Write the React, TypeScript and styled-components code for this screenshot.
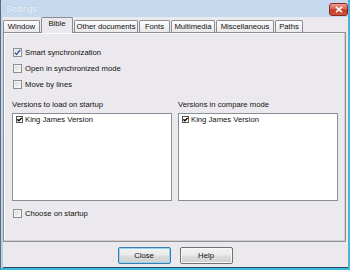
import React from 'react';
import styled, { createGlobalStyle } from 'styled-components';

const Global = createGlobalStyle`
  html, body { margin: 0; padding: 0; }
  body {
    width: 350px; height: 270px; overflow: hidden;
    font-family: "Liberation Sans", Arial, sans-serif;
    -webkit-font-smoothing: antialiased;
  }
`;

const Window = styled.div`
  width: 350px;
  height: 270px;
  box-sizing: border-box;
  display: flex;
  flex-direction: column;
  background: linear-gradient(#c6d9ee, #b8cfe8);
  border-left: 1px solid #5d6b7c;
  border-right: 2px solid #49b6de;
  border-bottom: 2px solid #3cb8e0;
  padding-left: 2px;
`;

const TitleBar = styled.div`
  height: 17px;
  flex: none;
  display: flex;
  align-items: center;
  justify-content: space-between;
  padding: 0 0 0 3px;
`;

const Title = styled.span`
  font-size: 8.5px;
  color: #eef3f9;
  text-shadow: 0 0 2px #a9c1dc;
  padding-top: 1px;
`;

const CloseBox = styled.div`
  width: 19px;
  height: 13px;
  box-sizing: border-box;
  margin-top: 2px;
  border: 1px solid #8a2a22;
  border-radius: 3px;
  background: linear-gradient(#e8a190 0%, #d8634f 45%, #c33a26 55%, #d2553f 100%);
  display: flex;
  align-items: center;
  justify-content: center;
`;

const Client = styled.div`
  flex: 1;
  display: flex;
  flex-direction: column;
  background: #ebe9ed;
  border-bottom: 1px solid #28465f;
  padding: 0 2px 3px 0;
`;

const TabStrip = styled.div`
  height: 15px;
  flex: none;
  display: flex;
  align-items: flex-end;
  gap: 1px;
  position: relative;
  z-index: 1;
`;

const Tab = styled.div<{ $w: number; $active?: boolean }>`
  width: ${p => p.$w}px;
  height: ${p => (p.$active ? 16 : 12)}px;
  margin-bottom: ${p => (p.$active ? -1 : 0)}px;
  box-sizing: border-box;
  border: 1px solid #8d8d91;
  border-bottom: none;
  border-radius: 2px 2px 0 0;
  background: ${p => (p.$active ? '#ebe9ed' : 'linear-gradient(#fdfdfd, #e8e8ea)')};
  font-size: 7.7px;
  color: #111;
  display: flex;
  justify-content: center;
  align-items: ${p => (p.$active ? 'flex-start' : 'center')};
  padding-top: ${p => (p.$active ? 1 : 0)}px;
  white-space: nowrap;
`;

const Panel = styled.div`
  height: 210px;
  flex: none;
  box-sizing: border-box;
  border: 1px solid #8f8f94;
  box-shadow: inset -1px -1px 0 #cfcdd2, inset 1px 1px 0 #fbfbfc;
  display: flex;
  flex-direction: column;
  padding: 11px 0 0 8px;
`;

const CheckRow = styled.label<{ $mt?: number }>`
  height: 16px;
  display: flex;
  align-items: center;
  gap: 3px;
  font-size: 7.7px;
  color: #111;
  margin-top: ${p => p.$mt || 0}px;
  padding-left: 1px;
`;

const Box = styled.span`
  width: 9px;
  height: 9px;
  box-sizing: border-box;
  border: 1px solid #8e8f91;
  background: linear-gradient(135deg, #d5d5d7, #fbfbfb);
  box-shadow: inset 0 0 0 1px #f4f4f4;
  display: flex;
  align-items: center;
  justify-content: center;
`;

const Columns = styled.div`
  display: grid;
  grid-template-columns: 160px 160px;
  column-gap: 6px;
  margin-top: 7px;
`;

const Column = styled.div`
  display: flex;
  flex-direction: column;
`;

const GroupLabel = styled.div`
  height: 12px;
  line-height: 12px;
  font-size: 7.7px;
  color: #111;
  margin-bottom: 2px;
`;

const ListBox = styled.div`
  height: 88px;
  box-sizing: border-box;
  border: 1px solid #8a8e96;
  background: #fff;
  padding: 0 2px;
`;

const ListItem = styled.div`
  height: 11px;
  display: flex;
  align-items: center;
  gap: 2px;
  font-size: 7.7px;
  color: #111;
  padding-left: 1px;
`;

const SmallBox = styled.span`
  width: 7px;
  height: 7px;
  box-sizing: border-box;
  border: 1px solid #555;
  background: #fff;
  display: flex;
  align-items: center;
  justify-content: center;
`;

const ButtonRow = styled.div`
  display: flex;
  justify-content: center;
  gap: 9px;
  padding-top: 5px;
  padding-left: 1px;
`;

const Button = styled.div<{ $default?: boolean }>`
  width: 53px;
  height: 17px;
  box-sizing: border-box;
  border: 1px solid ${p => (p.$default ? '#3b7eae' : '#707070')};
  border-radius: 2px;
  background: linear-gradient(#f3f3f3 0%, #ebebeb 48%, #dddddd 52%, #cfcfcf 100%);
  box-shadow: inset 0 0 0 1px ${p => (p.$default ? '#8fd6f2' : '#f8f8f8')};
  font-size: 7.7px;
  color: #111;
  display: flex;
  align-items: center;
  justify-content: center;
`;

const BlueCheck = () => (
  <svg width="7" height="7" viewBox="0 0 7 7">
    <path d="M0.8 3.6 L2.6 5.6 L6.2 0.8" fill="none" stroke="#2b4aa8" strokeWidth="1.3" />
  </svg>
);

const BlackCheck = () => (
  <svg width="5" height="5" viewBox="0 0 5 5">
    <path d="M0.4 2.3 L1.9 3.8 L4.6 0.9" fill="none" stroke="#000" strokeWidth="1.4" />
  </svg>
);

const CloseX = () => (
  <svg width="8" height="7" viewBox="0 0 8 7">
    <path d="M1 0.8 L7 6.2 M7 0.8 L1 6.2" stroke="#fff" strokeWidth="1.6" />
  </svg>
);

const tabs: { label: string; w: number; active?: boolean }[] = [
  { label: 'Window', w: 37 },
  { label: 'Bible', w: 32, active: true },
  { label: 'Other documents', w: 64 },
  { label: 'Fonts', w: 31 },
  { label: 'Multimedia', w: 44 },
  { label: 'Miscellaneous', w: 58 },
  { label: 'Paths', w: 28 },
];

export default function App() {
  return (
    <>
      <Global />
      <Window>
        <TitleBar>
          <Title>Settings</Title>
          <CloseBox><CloseX /></CloseBox>
        </TitleBar>
        <Client>
          <TabStrip>
            {tabs.map(t => (
              <Tab key={t.label} $w={t.w} $active={t.active}>{t.label}</Tab>
            ))}
          </TabStrip>
          <Panel>
            <CheckRow><Box><BlueCheck /></Box>Smart synchronization</CheckRow>
            <CheckRow><Box />Open in synchronized mode</CheckRow>
            <CheckRow><Box />Move by lines</CheckRow>
            <Columns>
              <Column>
                <GroupLabel>Versions to load on startup</GroupLabel>
                <ListBox>
                  <ListItem><SmallBox><BlackCheck /></SmallBox>King James Version</ListItem>
                </ListBox>
              </Column>
              <Column>
                <GroupLabel>Versions in compare mode</GroupLabel>
                <ListBox>
                  <ListItem><SmallBox><BlackCheck /></SmallBox>King James Version</ListItem>
                </ListBox>
              </Column>
            </Columns>
            <CheckRow $mt={4}><Box />Choose on startup</CheckRow>
          </Panel>
          <ButtonRow>
            <Button $default>Close</Button>
            <Button>Help</Button>
          </ButtonRow>
        </Client>
      </Window>
    </>
  );
}
